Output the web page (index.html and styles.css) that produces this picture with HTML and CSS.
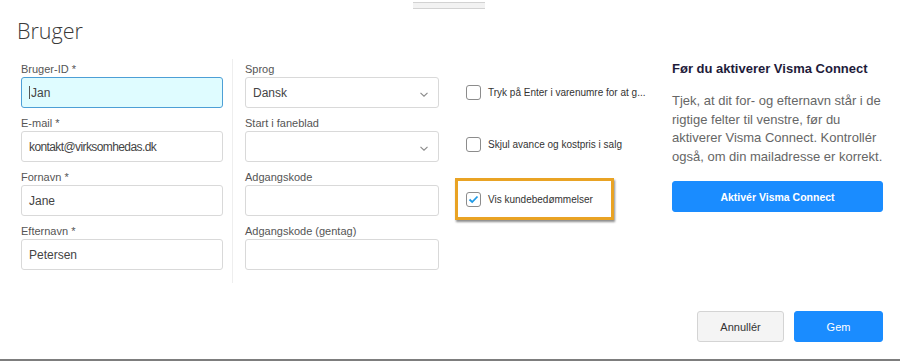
FILE: index.html
```html
<!DOCTYPE html>
<html lang="da">
<head>
<meta charset="utf-8">
<title>Bruger</title>
<link rel="stylesheet" href="styles.css">
</head>
<body>
<div class="modal">
  <div class="grip"></div>
  <h1 class="title">Bruger</h1>
  <div class="content">
    <div class="col col-a">
      <div class="field">
        <label class="label">Bruger-ID *</label>
        <div class="input input-focus"><span class="caret"></span>Jan</div>
      </div>
      <div class="field">
        <label class="label">E-mail *</label>
        <div class="input input-email">kontakt@virksomhedas.dk</div>
      </div>
      <div class="field">
        <label class="label">Fornavn *</label>
        <div class="input">Jane</div>
      </div>
      <div class="field">
        <label class="label">Efternavn *</label>
        <div class="input">Petersen</div>
      </div>
    </div>
    <div class="col col-b">
      <div class="field">
        <label class="label">Sprog</label>
        <div class="input select">Dansk<svg class="chev" width="8" height="5" viewBox="0 0 8 5"><path d="M0.5 0.8 L4 4.2 L7.5 0.8" fill="none" stroke="#8a8a8a" stroke-width="1.1"/></svg></div>
      </div>
      <div class="field">
        <label class="label">Start i faneblad</label>
        <div class="input select"><svg class="chev" width="8" height="5" viewBox="0 0 8 5"><path d="M0.5 0.8 L4 4.2 L7.5 0.8" fill="none" stroke="#8a8a8a" stroke-width="1.1"/></svg></div>
      </div>
      <div class="field">
        <label class="label">Adgangskode</label>
        <div class="input"></div>
      </div>
      <div class="field">
        <label class="label">Adgangskode (gentag)</label>
        <div class="input"></div>
      </div>
    </div>
    <div class="col col-c">
      <div class="check check-1">
        <span class="box"></span>
        <span class="check-text">Tryk på Enter i varenumre for at g...</span>
      </div>
      <div class="check check-2">
        <span class="box"></span>
        <span class="check-text">Skjul avance og kostpris i salg</span>
      </div>
      <div class="check check-3 highlight">
        <span class="box"><svg width="11" height="9" viewBox="0 0 11 9"><path d="M1.5 4.5 L4.2 7 L9.5 1.5" fill="none" stroke="#1f9ae6" stroke-width="1.8"/></svg></span>
        <span class="check-text">Vis kundebedømmelser</span>
      </div>
    </div>
    <div class="col col-d">
      <h2 class="info-title">Før du aktiverer Visma Connect</h2>
      <p class="info-text">Tjek, at dit for- og efternavn står i de rigtige felter til venstre, før du aktiverer Visma Connect. Kontrollér også, om din mailadresse er korrekt.</p>
      <button class="btn btn-primary btn-wide">Aktivér Visma Connect</button>
    </div>
  </div>
  <div class="footer">
    <button class="btn btn-default">Annullér</button>
    <button class="btn btn-primary btn-save">Gem</button>
  </div>
</div>
</body>
</html>
```
FILE: styles.css
```css
* { box-sizing: border-box; }
html, body { margin: 0; padding: 0; background: #fff; }
body { font-family: "Liberation Sans", Arial, sans-serif; color: #333; }

.modal {
  height: 361px;
  display: flex;
  flex-direction: column;
  border-bottom: 2px solid #7d7d7d;
  background: #fff;
}

.grip {
  width: 72px;
  height: 7px;
  margin: 2px 0 0 413px;
  border-top: 1px solid #d2d2d2;
  border-bottom: 1px solid #d2d2d2;
  background: #f2f2f2;
}

.title {
  margin: 7px 0 0 17px;
  font-family: "Open Sans", sans-serif;
  font-weight: 300;
  font-size: 21.5px;
  line-height: 29px;
  color: #3a3a3a;
}

.content {
  display: flex;
  margin-top: 14px;
  padding-left: 21px;
}

.col-a { width: 202px; margin-right: 9px; padding-bottom: 8px; }
.col-b { width: 207px; padding-left: 12px; border-left: 1px solid #eeeeee; padding-bottom: 8px; }
.col-c { width: 217px; margin-left: 16px; padding-top: 12px; }
.col-d { width: 211px; padding-top: 2px; }

.field { margin-bottom: 5px; }
.label {
  display: block;
  height: 18px;
  font-size: 11px;
  line-height: 18px;
  color: #555;
  padding-top: 1px;
}
.input {
  height: 31px;
  border: 1px solid #d9d9d9;
  border-radius: 3px;
  background: #fff;
  padding: 0 7px;
  display: flex;
  align-items: center;
  font-size: 12px;
  color: #444;
}
.input-email { letter-spacing: -0.6px; }
.input-focus {
  background: #dffcff;
  border-color: #4d9fd6;
}
.caret {
  width: 1px;
  height: 13px;
  background: #555;
  margin-right: 1px;
}
.select { justify-content: space-between; padding-right: 10px; }
.chev { margin-left: auto; margin-top: 3px; }

.check {
  display: flex;
  align-items: center;
  height: 42px;
  padding: 0 8px;
  border: 3px solid transparent;
  font-size: 10px;
  color: #333;
}
.check-2 { margin-top: 10px; }
.check-3 { margin-top: 13px; }
.highlight {
  width: 159px;
  border-color: #e9a324;
  box-shadow: 1px 2px 2px rgba(0, 0, 0, 0.45);
}
.box {
  width: 15px;
  height: 15px;
  border: 1px solid #8c8c8c;
  border-radius: 3px;
  margin-right: 7px;
  flex: none;
  display: flex;
  align-items: center;
  justify-content: center;
}
.check-text { white-space: nowrap; }

.info-title {
  margin: 0;
  font-size: 13px;
  line-height: 16px;
  font-weight: 700;
  color: #1e1b3a;
}
.info-text {
  margin: 15px 0 0;
  font-size: 13px;
  line-height: 18.5px;
  color: #666;
}

.btn {
  font-family: "Liberation Sans", Arial, sans-serif;
  height: 31px;
  border-radius: 3px;
  font-size: 11px;
  cursor: pointer;
}
.btn-primary {
  background: #1a8cff;
  border: 1px solid #1a8cff;
  color: #fff;
}
.btn-wide {
  display: block;
  width: 211px;
  margin-top: 15px;
  font-weight: 700;
  font-size: 10.5px;
}
.btn-default {
  background: #f4f4f4;
  border: 1px solid #d4d4d4;
  color: #333;
  width: 87px;
}
.btn-save { width: 89px; }

.footer {
  margin-top: auto;
  display: flex;
  justify-content: flex-end;
  gap: 10px;
  padding: 0 17px 17px 0;
}
```
